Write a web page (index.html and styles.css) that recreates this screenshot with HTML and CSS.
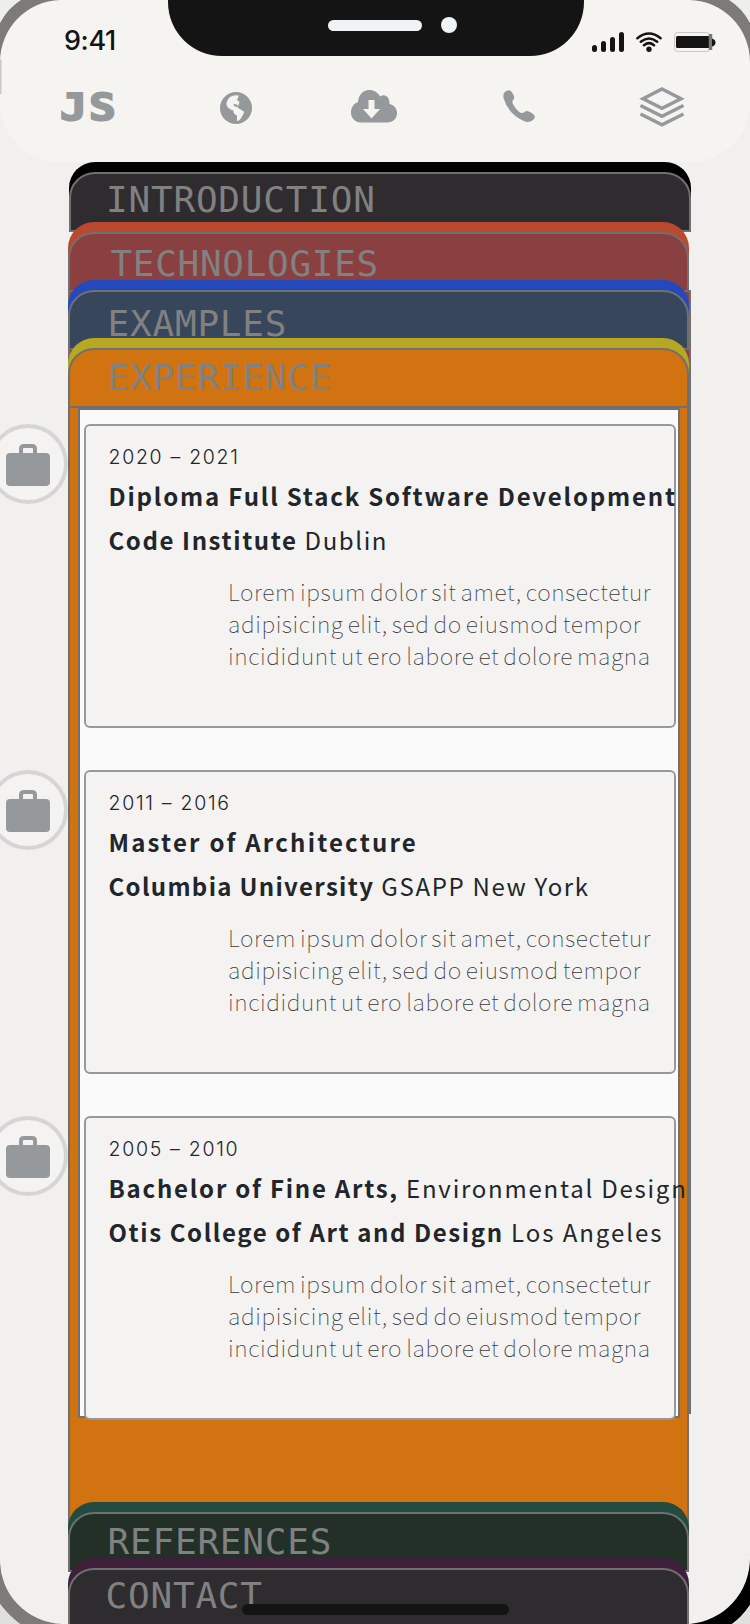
FILE: index.html
```html
<!DOCTYPE html>
<html lang="en">
<head>
<meta charset="utf-8">
<title>Portfolio</title>
<link rel="stylesheet" href="styles.css">
</head>
<body>
<div class="phone">
  <header class="top">
    <div class="status">
      <span class="time">9:41</span>
      <div class="notch"><span class="speaker"></span><span class="camera"></span></div>
      <svg class="signals" width="126" height="24" viewBox="590 30 126 24">
        <g fill="#141414"><rect x="592" y="45" width="5" height="7" rx="2.5"/><rect x="601" y="41" width="5" height="11" rx="2.5"/><rect x="610" y="37" width="5" height="15" rx="2.5"/><rect x="619" y="32" width="5" height="20" rx="2.5"/><circle cx="649" cy="49.3" r="2.7"/></g>
        <g fill="none" stroke="#141414" stroke-width="2.5" stroke-linecap="round"><path d="M637.4 38.2Q649 28.7 660.6 38.2M640.8 41.8Q649 35.2 657.2 41.8M644 45.2Q649 41 654 45.2"/></g>
        <rect x="674.5" y="32.5" width="35" height="19" rx="3" fill="none" stroke="#c7c7c4"/>
        <rect x="676" y="36" width="34" height="12" rx="1.5" fill="#141414"/><path d="M710.500 34v16" stroke="#777" stroke-width="3.500"/><path d="M712 38.500q3.500 1 3.500 4t-3.500 4z" fill="#141414"/>
      </svg>
    </div>
    <nav class="nav">
      <span class="logo">JS</span>
      <svg class="globe" width="32" height="32" viewBox="0 0 32 32"><circle cx="16" cy="16" r="16" fill="#95999b"/><path fill="#f5f4f0" d="M19 3.500Q9 2 6.500 10.500C6 15 9 17 13.500 18.500C13 22 16 22.500 17 24V29C21 28.500 21.500 24.500 24 21C24 17.500 19.500 18 18 15.500L14 14L13.500 12L17 12.500L18 14.500L19.500 10L17 8Z"/></svg>
      <svg class="cloud" width="46" height="33" viewBox="0 0 46 33"><path fill="#95999b" d="M10 32.500C4 32.500 0 28 0 22.500C0 17 3 13.500 7 12C7.500 5 12 0 18 0C23 0 27 2.500 29 6.500C34 3 39 7 38.500 14C43 15 46 18.500 46 23C46 28.500 42 32.500 36 32.500Z"/><path fill="#f5f4f0" d="M17.500 10h6v9h5.500L20.500 28.500L12 19h5.500z"/></svg>
      <svg class="call" width="32" height="33" viewBox="0 0 32 33"><path fill="#95999b" d="M1 3Q4-1 8 1Q12 6 11 9Q8 11 10.500 15Q14 21 18 23Q20 23.500 22 21.500Q25 20 30 24Q33 26 31 29Q28 33 22 31.500Q5 24 .5 8Q0 5 1 3Z"/></svg>
      <svg class="layers" width="46" height="40" viewBox="0 0 46 40"><path fill="none" stroke="#95999b" stroke-width="3.400" d="M23 2L42 11.700L23 21.300L4 11.700ZM1.500 18.500L23 29.300L44.500 18.500M1.500 27L23 37.800L44.500 27"/></svg>
    </nav>
  </header>

  <main class="stack">
    <div class="underlay"></div>
    <section class="tab intro"><h2 class="panel">INTRODUCTION</h2></section>
    <section class="tab tech"><h2 class="panel">TECHNOLOGIES</h2></section>
    <section class="tab examples"><h2 class="panel">EXAMPLES</h2></section>
    <section class="tab experience">
      <h2 class="panel">EXPERIENCE</h2>
      <div class="body">
        <div class="sheet">
          <article class="card">
            <span class="badge"><svg width="44" height="42" viewBox="0 0 44 42"><rect y="9" width="44" height="33" rx="4" fill="#95999b"/><path d="M15 10V5Q15 2 18 2H26Q29 2 29 5V10" fill="none" stroke="#95999b" stroke-width="4"/></svg></span>
            <p class="years">2020 – 2021</p>
            <h3 class="line t1"><b>Diploma Full Stack Software Development</b></h3>
            <p class="line s1"><b>Code Institute</b> Dublin</p>
            <p class="lorem">Lorem ipsum dolor sit amet, consectetur<br>adipisicing elit, sed do eiusmod tempor<br>incididunt ut ero labore et dolore magna</p>
          </article>
          <article class="card">
            <span class="badge"><svg width="44" height="42" viewBox="0 0 44 42"><rect y="9" width="44" height="33" rx="4" fill="#95999b"/><path d="M15 10V5Q15 2 18 2H26Q29 2 29 5V10" fill="none" stroke="#95999b" stroke-width="4"/></svg></span>
            <p class="years">2011 – 2016</p>
            <h3 class="line t2"><b>Master of Architecture</b></h3>
            <p class="line s2"><b>Columbia University</b> GSAPP New York</p>
            <p class="lorem">Lorem ipsum dolor sit amet, consectetur<br>adipisicing elit, sed do eiusmod tempor<br>incididunt ut ero labore et dolore magna</p>
          </article>
          <article class="card">
            <span class="badge"><svg width="44" height="42" viewBox="0 0 44 42"><rect y="9" width="44" height="33" rx="4" fill="#95999b"/><path d="M15 10V5Q15 2 18 2H26Q29 2 29 5V10" fill="none" stroke="#95999b" stroke-width="4"/></svg></span>
            <p class="years">2005 – 2010</p>
            <h3 class="line t3"><b>Bachelor of Fine Arts,</b> Environmental Design</h3>
            <p class="line s3"><b>Otis College of Art and Design</b> Los Angeles</p>
            <p class="lorem">Lorem ipsum dolor sit amet, consectetur<br>adipisicing elit, sed do eiusmod tempor<br>incididunt ut ero labore et dolore magna</p>
          </article>
        </div>
      </div>
    </section>
    <section class="tab references"><h2 class="panel">REFERENCES</h2></section>
    <section class="tab contact"><h2 class="panel">CONTACT</h2></section>
  </main>
  <svg class="bezel" width="750" height="1624" viewBox="0 0 750 1624">
    <g fill="#eeeeec"><path d="M0 0H24A73 73 0 0 0 0 22Z"/><path d="M750 0H727A73 73 0 0 1 750 22Z"/></g>
    <g fill="#7c7b77"><path d="M21 0H60A62 62 0 0 0 0 62V23Q8 8 21 0Z"/><path d="M729 0H690A62 62 0 0 1 750 62V23Q742 8 729 0Z"/><path d="M0 1558A64 64 0 0 0 62 1624H20Q9 1616 0 1604Z"/></g>
    <path d="M750 1558A66 66 0 0 1 690 1624H732Q742 1617 750 1605Z"/>
    <path fill="#e0e0de" d="M0 1604Q9 1616 20 1624H0ZM750 1605Q742 1617 732 1624H750Z"/>
    <path fill="#c8c8c5" d="M0 60H1.500V94H0Z"/>
  </svg>
  <div class="home"></div>
</div>
</body>
</html>
```
FILE: styles.css
```css
* { box-sizing: border-box; }
body { margin: 0; background: #f1f0ef; font-family: "Noto Sans CJK SC", "Noto Sans", sans-serif; }
h2, h3, p { margin: 0; font-weight: 400; }
.phone { position: relative; width: 750px; height: 1624px; overflow: hidden; background: #f1f0ef; }
.top { height: 162px; background: #f5f4f0; border-radius: 0 0 60px 60px; }
.status { display: flex; height: 56px; }
.time { width: 168px; padding: 25px 0 0 64px; font: 500 27px/32px Inter, sans-serif; letter-spacing: -.4px; color: #141414; }
.notch { display: flex; gap: 19px; width: 416px; height: 56px; padding: 20px 0 0 160px; background: #141414; border-radius: 0 0 54px 54px; }
.speaker { width: 94px; height: 11px; border-radius: 6px; background: #eff3f6; }
.camera { width: 16px; height: 16px; margin-top: -3px; border-radius: 50%; background: #eff3f6; }
.signals { margin: 30px 0 0 6px; }
.nav { display: flex; height: 71px; padding: 31px 0 0 60px; }
.logo { width: 160px; font: 700 38px/40px "DejaVu Sans Mono", monospace; letter-spacing: 2px; color: #95999b; -webkit-text-stroke: 2px #95999b; transform: scaleX(1.17); transform-origin: left; }
.globe { margin-top: 5px; }
.cloud { margin: 3px 0 0 99px; }
.call { margin: 3px 0 0 106px; }
.layers { margin: 0 0 0 104px; }

.stack { position: relative; display: flex; flex-direction: column; padding-left: 67.5px; }
.underlay { position: absolute; left: 68px; top: 128px; width: 623px; height: 1124px; background: #8a4040; border: 2px solid #707070; }
.tab { position: relative; flex: none; width: 621.5px; height: 58px; padding-top: 10px; border-radius: 26px 26px 0 0; }
.panel { height: 60px; padding: 8px 0 0 38px; border: 2px solid #707070; border-radius: 26px 26px 0 0; font: 400 36px/36px "DejaVu Sans Mono", monospace; letter-spacing: .8px; color: #818181; }
.intro { width: 622px; height: 60px; margin-left: 1.5px; background: #000; }
.intro .panel { padding-left: 35px; background: #2f2c2f; }
.tech { background: #b94a30; }
.tech .panel { padding-top: 12px; padding-left: 41px; letter-spacing: .7px; background: #8a4040; }
.examples { background: #2349bc; }
.examples .panel { padding-top: 14px; background: #38465b; }
.experience { height: 1164px; background: #b6a823; }
.experience .panel { padding-top: 10px; background: #d07310; }
.body { height: 1140px; margin-left: .5px; padding: 0 7px 0 8px; background: #d07310; border: 2px solid #707070; border-top: 0; }
.sheet { display: flex; flex-direction: column; gap: 42px; height: 1010px; padding: 14px 2px 0 4px; background: #fafafa; border: 2px solid #707070; }
.card { position: relative; flex: none; height: 304px; padding: 18px 0 0 22.5px; background: #f4f3f2; border: 2px solid #95999b; border-radius: 6px; white-space: nowrap; }
.badge { position: absolute; left: -98px; top: -2px; display: flex; width: 80px; height: 80px; padding: 16px 0 0 14px; border: 4px solid #d4d5d4; border-radius: 50%; background: #f4f3f2; }
.years { height: 30px; font: 300 19.5px/26px Inter, sans-serif; letter-spacing: 1.7px; color: #22262a; }
.line { height: 44px; font-size: 24px; line-height: 44px; letter-spacing: 1.82px; color: #22262a; }
.t2 { letter-spacing: 2.2px; }
.t3 { letter-spacing: 1.76px; }
.s1 { letter-spacing: 1.6px; }
.s2 { letter-spacing: 1.65px; }
.s2 b { letter-spacing: 1.32px; }
.s3 { letter-spacing: 1.95px; }
.s3 b { letter-spacing: 1.6px; }
.lorem { padding: 13px 0 0 119.5px; font-size: 23px; line-height: 32px; font-weight: 100; letter-spacing: .58px; word-spacing: -1.6px; color: #3a3a3a; }
.references { height: 56px; background: #244b3f; }
.references .panel { padding-top: 10px; background: #223028; }
.contact { height: 66px; background: #3e203b; }
.contact .panel { padding-left: 36px; background: #2f2c2f; }
.bezel { position: absolute; left: 0; top: 0; }
.home { position: absolute; left: 242px; top: 1604px; width: 267px; height: 11px; border-radius: 6px; background: #141414; }
```
